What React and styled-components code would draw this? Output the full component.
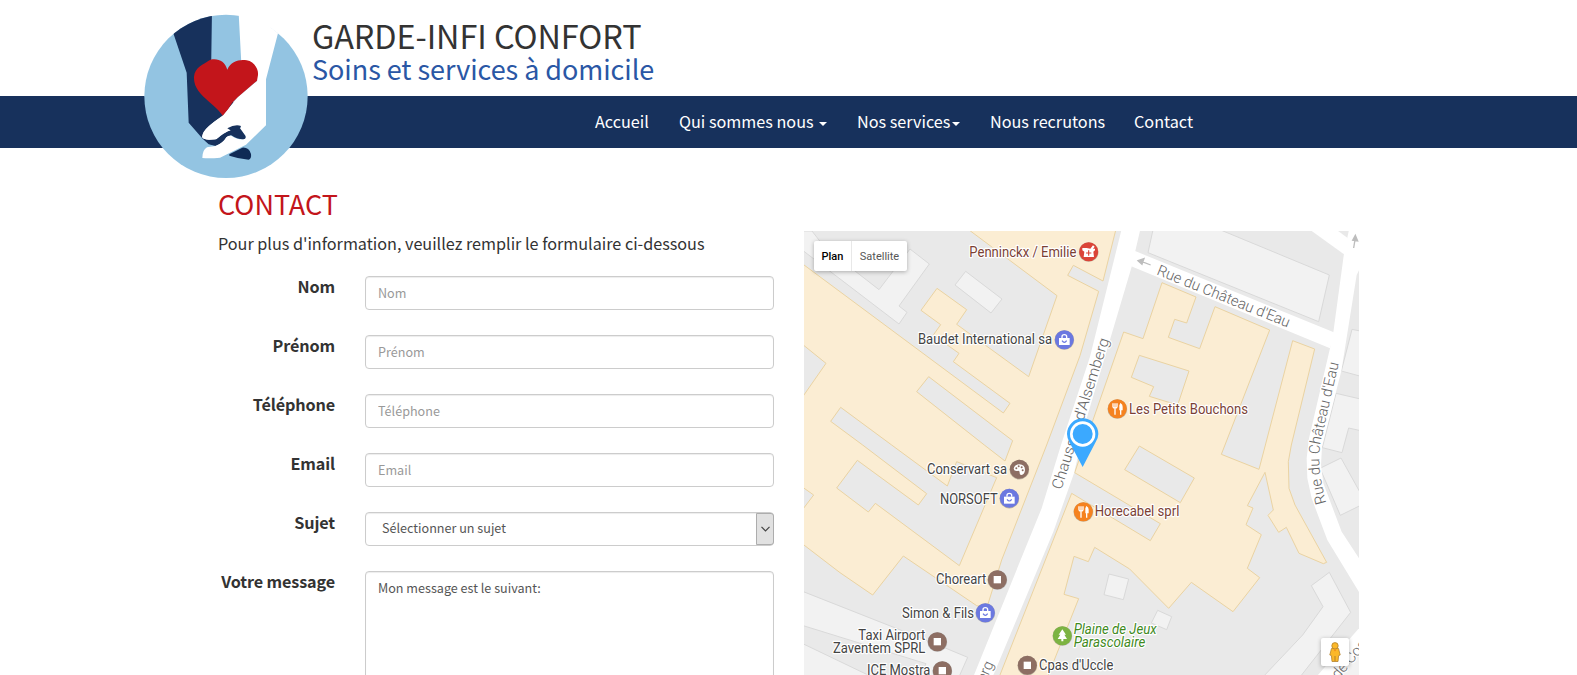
import React from "react";
import styled, { createGlobalStyle } from "styled-components";

const Global = createGlobalStyle`
  * { box-sizing: border-box; }
  body {
    margin: 0;
    background: #fff;
    color: #333;
    font-family: "Noto Sans CJK SC", "Open Sans", sans-serif;
    font-size: 16.2px;
    overflow: hidden;
  }
`;

const Page = styled.div`
  height: 675px;
  overflow: hidden;
`;

const Header = styled.header`
  position: relative;
  height: 148px;
`;

const Brand = styled.div`
  height: 96px;
  padding: 18px 0 0 312px;
`;

const BrandName = styled.div`
  font-size: 32.4px;
  line-height: 34px;
  letter-spacing: -0.06px;
  white-space: nowrap;
`;

const Tagline = styled.div`
  font-size: 27px;
  line-height: 33px;
  letter-spacing: -0.05px;
  color: #2a57a5;
  white-space: nowrap;
`;

const Logo = styled.svg`
  position: absolute;
  left: 140px;
  top: 10px;
  width: 172px;
  height: 172px;
`;

const Nav = styled.nav`
  display: flex;
  height: 52px;
  padding-left: 580px;
  background: #17315c;
`;

const NavItem = styled.a`
  display: flex;
  align-items: center;
  width: ${(p) => p.$w}px;
  height: 50px;
  padding-left: 15px;
  color: #fff;
  line-height: 50px;
  white-space: nowrap;
`;

const Caret = styled.span`
  margin-left: ${(p) => p.$gap}px;
  margin-top: 5px;
  border: 4px solid transparent;
  border-top-color: #fff;
  border-bottom: 0;
`;

const Main = styled.main`
  display: flex;
  padding-left: 218px;
`;

const FormColumn = styled.section`
  width: 586px;
  padding-top: 38px;
`;

const Title = styled.h1`
  margin: 0;
  color: #c3151b;
  font-size: 27px;
  font-weight: 400;
  line-height: 36px;
`;

const Intro = styled.p`
  margin: 8px 0 0;
  height: 46px;
  line-height: 26px;
  letter-spacing: -0.01px;
  white-space: nowrap;
`;

const Field = styled.div`
  display: flex;
  height: ${(p) => (p.$tall ? 215 : 34)}px;
  margin-bottom: 25px;
`;

const Label = styled.label`
  width: 117px;
  margin-right: 30px;
  font-weight: 700;
  line-height: 20px;
  letter-spacing: -0.13px;
  text-align: right;
  white-space: nowrap;
`;

const control = `
  width: 409px;
  height: 100%;
  margin: 0;
  padding: 0 12px 2px;
  border: 1px solid #ccc;
  border-radius: 4px;
  outline: 0;
  background: #fff;
  box-shadow: inset 0 1px 1px rgba(0, 0, 0, .075);
  color: #555;
  font-family: inherit;
  font-size: 12.6px;
`;

const Input = styled.input`
  ${control}
  &::placeholder { color: #999; opacity: 1; }
`;

const TextArea = styled.textarea`
  ${control}
  padding-top: 6px;
  line-height: 20px;
  resize: none;
`;

const Select = styled.div`
  ${control}
  display: flex;
  justify-content: space-between;
  padding: 0 0 0 16px;
  line-height: 30px;
`;

const SelectButton = styled.span`
  display: grid;
  place-items: center;
  width: 18px;
  height: 32px;
  margin-right: -1px;
  border: 1px solid #adadad;
  border-radius: 0 3px 3px 0;
  background: #e1e1e1;
`;

const MapPanel = styled.section`
  position: relative;
  width: 555px;
  height: 444px;
  margin-top: 83px;
  overflow: hidden;
  font-family: Roboto, sans-serif;
`;

const MapDrawing = styled.svg`
  display: block;
  width: 555px;
  height: 444px;
`;

const MapTypes = styled.div`
  position: absolute;
  left: 10px;
  top: 10px;
  display: flex;
  height: 30px;
  border-radius: 2px;
  background: #fff;
  box-shadow: 0 1px 4px rgba(0, 0, 0, .3);
`;

const MapType = styled.button`
  width: ${(p) => p.$w}px;
  padding: 0;
  border: 0;
  border-left: ${(p) => (p.$active ? "0" : "1px solid #e8e8e8")};
  background: none;
  color: ${(p) => (p.$active ? "#000" : "#565656")};
  font: ${(p) => (p.$active ? 500 : 400)} 11px Roboto, sans-serif;
`;

const Pegman = styled.div`
  position: absolute;
  left: 517px;
  top: 407px;
  display: grid;
  place-items: center;
  width: 28px;
  height: 28px;
  border-radius: 2px;
  background: #fff;
  box-shadow: 0 1px 4px rgba(0, 0, 0, .3);
`;

function LogoArt() {
  return (
    <Logo viewBox="0 0 516 516" aria-label="Garde-Infi Confort">
      <clipPath id="disc"><circle cx="258" cy="259" r="245" /></clipPath>
      <circle cx="258" cy="259" r="245" fill="#93c4e2" />
      <g clipPath="url(#disc)">
        <path d="M95 60 100 70 140 188 146 338 188 386 206 403 228 408 262 395 300 300 213 200 216 0H95Z" fill="#17315c" />
      </g>
      <path d="M296 10 304 160 352 212 293 262 247 317Q225 332 205 350 188 364 186 380 188 388 206 389L229 388Q250 371 272 360L300 353 330 300 378 346V208L414 70Q360 22 296 10Z" fill="#fff" />
      <path d="M378 208V346L318 404 240 443Q210 446 187 444 187 420 201 412L226 408Q250 398 258 382 264 374 274 377 290 389 310 388 319 386 316 377L299 356Q306 348 298 347 270 344 248 361L229 386 270 330 345 220Z" fill="#fff" />
      <path d="M187 382Q189 388 208 389L228 388Q255 366 276 360L299 355 293 340 250 318Q187 354 187 382Z" fill="#fff" />
      <path d="M204 392 229 389Q250 368 276 360L300 355 306 363 316 377Q320 386 309 388 291 388 274 376 266 374 258 382 245 403 222 406 208 403 197 394Z" fill="#17315c" />
      <path d="M262 355Q285 342 303 348L299 358 275 363Z" fill="#17315c" />
      <path d="M268 433 307 413Q326 411 333 432 335 446 326 449 298 447 268 437Z" fill="#0f2a55" />
      <path d="M262 179C272 153 300 147 320 151 343 155 356 177 354 195L351 212 293 262Q275 277 264 298L248 317Q238 301 207 275C182 253 160 232 162 200 164 171 192 162 211 149 236 144 254 154 262 179Z" fill="#c3151b" />
    </Logo>
  );
}

const TONES = { shop: "#6b78e0", food: "#f5821f", brown: "#8d6e63", park: "#7cb342", health: "#db4437" };

function PoiGlyph({ kind }) {
  switch (kind) {
    case "shop":
      return (
        <>
          <path d="M-16-5H16V16H-16Z" fill="#fff" />
          <path d="M-7-5V-9Q-7-15 0-15T7-9V-5" fill="none" stroke="#fff" strokeWidth="4" />
          <path d="M-7 3Q0 13 7 3" fill="none" stroke="#6b78e0" strokeWidth="3.5" />
        </>
      );
    case "food":
      return (
        <g fill="none" stroke="#fff" strokeWidth="4">
          <path d="M-13-16V-6Q-13-2-7-2T-1-6V-16M-7-16V18" />
          <path d="M10 18V-14Q14-12 14-5V3H8V-10L10-14" fill="#fff" />
        </g>
      );
    case "park":
      return <path d="M0-19 11-3H6L14 10H3V17H-3V10H-14L-6-3H-11Z" fill="#fff" />;
    case "art":
      return (
        <>
          <path d="M-17-2Q-14-15 0-15 17-14 17 2 16 15 6 17 0 17 1 9 1 3-6 5-16 6-17-2Z" fill="#fff" />
          <g fill="#8d6e63"><circle cx="-9" cy="-3" r="3" /><circle cx="-2" cy="-9" r="3" /><circle cx="7" cy="-6" r="3" /><circle cx="10" cy="3" r="3" /></g>
        </>
      );
    case "health":
      return (
        <>
          <path d="M-19-11H-6L5-9 13-19 18-15 13-9H19V-4L14 0 16 16H-15L-13 0-19-4Z" fill="#fff" />
          <path d="M0-4V12M-8 4H8" stroke="#db4437" strokeWidth="3.5" />
        </>
      );
    default:
      return <path d="M-11-11H11V11H-11Z" fill="#fff" />;
  }
}

const POIS = [
  { x: 866, y: 80, kind: "health", tone: "health", color: "#7b3f35", lines: [[508, 95, 321, "Penninckx / Emilie"]] },
  { x: 793, y: 344, kind: "shop", tone: "shop", lines: [[354, 356, 402, "Baudet International sa"]] },
  { x: 952, y: 551, kind: "food", tone: "food", color: "#7b3f35", lines: [[987, 566, 357, "Les Petits Bouchons"]] },
  { x: 658, y: 733, kind: "art", tone: "brown", lines: [[381, 747, 240, "Conservart sa"]] },
  { x: 628, y: 820, kind: "shop", tone: "shop", lines: [[420, 836, 173, "NORSOFT"]] },
  { x: 850, y: 860, kind: "food", tone: "food", color: "#7b3f35", lines: [[884, 872, 254, "Horecabel sprl"]] },
  { x: 592, y: 1064, kind: "box", tone: "brown", lines: [[408, 1077, 151, "Choreart"]] },
  { x: 556, y: 1163, kind: "shop", tone: "shop", lines: [[306, 1178, 216, "Simon & Fils"]] },
  { x: 412, y: 1250, kind: "box", tone: "brown", lines: [[175, 1244, 201, "Taxi Airport"], [99, 1283, 277, "Zaventem SPRL"]] },
  { x: 427, y: 1337, kind: "box", tone: "brown", lines: [[201, 1350, 190, "ICE Mostra"]] },
  { x: 787, y: 1232, kind: "park", tone: "park", color: "#3f8a1d", italic: true, lines: [[821, 1226, 249, "Plaine de Jeux"], [821, 1265, 215, "Parascolaire"]] },
  { x: 682, y: 1321, kind: "box", tone: "brown", lines: [[717, 1335, 223, "Cpas d'Uccle"]] },
];

const PALE = [
  "0,18 36,18 70,62 165,138 237,194 330,72 388,117 297,243 321,262 297,297 0,70",
  "497,139 606,222 573,264 465,180",
  "1060,10 1044,83 1556,290 1588,150 1250,10",
  "1656,313 1624,438 1690,456 1690,320",
  "1608,505 1690,524 1690,619 1646,609 1626,683 1567,668",
  "1623,699 1560,730 1621,871 1690,837 1690,820",
  "1588,1042 1534,1082 1569,1145 1508,1230 1385,1360 1497,1360 1652,1162",
  "927,1047 986,1062 970,1124 912,1109",
  "1073,1156 1115,1175 1100,1214 1054,1194",
  "0,1096 390,1250 503,1297 475,1360 0,1360",
  "1690,1270 1600,1370 1690,1370",
];

const SAND = [
  "0,111 610,564 630,535 460,410 477,385 400,330 422,299 363,256 411,190 500,254 470,298 686,455 771,212 498,8 949,8 909,168 820,121 803,151 896,199 840,392 740,660 605,1005 560,1150 530,1142 310,993 218,1110 120,1043 0,951",
  "971,321 1029,341 1086,173 1188,216 1160,294 1124,283 1105,337 1199,371 1245,245 1409,315 1264,688 1377,733 1478,347 1544,372 1474,660 1465,710 1467,790 1485,840 1580,1012 1570,1016 1497,985 1459,907 1436,922 1404,871 1420,855 1395,742 1342,842 1359,849 1338,899 1384,929 1342,1030 1379,1058 1299,1160 1174,1072 1106,1150 989,1032 884,967 865,1010 822,994 792,1108 836,1121 741,1360 596,1360 815,805 1051,947 1081,896 824,743",
];

const COURTS = [
  "0,352 78,415 0,527",
  "0,781 41,810 0,864",
  "122,547 92,589 188,660 380,806 355,840 172,706 110,789 205,861 226,835 478,1022 590,758 470,710 442,783 275,660",
  "386,455 350,500 553,660 615,708 638,647",
  "1018,391 1167,438 1133,540 1048,514 1061,485 994,457",
  "1018,663 1183,759 1141,833 974,734",
];

const ROADS = [
  "968,0 1024,0 995,125 860,580 822,745 760,920 576,1360 518,1360 680,960 725,850 783,660 870,395",
  "1000,76 1605,323 1590,370 990,122",
  "1650,0 1632,85 1600,322 1590,370 1527,640 1520,700 1522,760 1535,820 1582,945 1690,1122 1690,1020 1625,920 1570,775 1563,720 1566,665 1624,438 1670,150 1690,110 1690,0",
  "1510,0 1635,90 1647,42 1590,0",
  "1690,1195 1545,1360 1605,1360 1690,1270",
];

const Halo = styled.g`
  paint-order: stroke;
  stroke: #fff;
  stroke-width: 7px;
  stroke-linejoin: round;
  font-size: ${(p) => p.$size || 42}px;
  font-weight: ${(p) => p.$weight || 400};
  font-style: ${(p) => (p.$italic ? "italic" : "normal")};
  fill: ${(p) => p.$color || "#444"};
`;

function Polys({ list, ...rest }) {
  return <g {...rest}>{list.map((points) => <polygon key={points} points={points} />)}</g>;
}

function CityMap() {
  return (
    <MapDrawing viewBox="12 18 1665 1332">
      <rect width="1700" height="1400" fill="#e9e9e9" />
      <Polys list={PALE} fill="#f2f2f2" stroke="#d9d9d9" strokeWidth="3" />
      <polygon points="0,1199 378,1316 358,1360 225,1360 0,1252" fill="#e9e9e9" stroke="#d9d9d9" strokeWidth="3" />
      <Polys list={SAND} fill="#fbedd3" stroke="#ead3a2" strokeWidth="3" />
      <Polys list={COURTS} fill="#e9e9e9" stroke="#ead3a2" strokeWidth="3" />
      <Polys list={ROADS} fill="#fff" />
      <g fill="#bdbdbd" stroke="#bdbdbd" strokeWidth="4">
        <path d="M1052 120 1026 110M1014 107 1032 101 1026 118Z" />
        <path d="M1661 69 1665 44M1666 31 1658 46 1673 48Z" />
      </g>
      <path id="east" d="M1579 834Q1560 765 1558 715 1556 670 1567 630L1617 412" fill="none" />
      <Halo $size={45} $weight={300} $color="#666">
        <text transform="translate(1068 148) rotate(22)" textLength="426" lengthAdjust="spacingAndGlyphs">Rue du Château d'Eau</text>
        <text transform="translate(784 796) rotate(-72.4)" textLength="474" lengthAdjust="spacingAndGlyphs">Chaussée d'Alsemberg</text>
        <text><textPath href="#east" textLength="428" lengthAdjust="spacingAndGlyphs">Rue du Château d'Eau</textPath></text>
        <text transform="translate(582 1316) rotate(-66)" textAnchor="end">Alsemberg</text>
        <text transform="translate(1614 1364) rotate(-49)">de Cos</text>
      </Halo>
      {POIS.map((p) => (
        <g key={p.lines[0][3]}>
          <Halo $color={p.color} $italic={p.italic}>
            {p.lines.map(([x, y, w, t]) => <text key={t} x={x} y={y} textLength={w} lengthAdjust="spacingAndGlyphs">{t}</text>)}
          </Halo>
          <g transform={`translate(${p.x} ${p.y})`}>
            <circle cy="1" r="29.5" fill="#000" opacity=".25" />
            <circle r="28.5" fill={TONES[p.tone]} />
            <PoiGlyph kind={p.kind} />
          </g>
        </g>
      ))}
      <path d="M848 726 808 651Q801 638 801 627A47 47 0 0 1 895 627Q895 638 887 651Z" fill="#3ba9ff" />
      <circle cx="848" cy="627" r="34" fill="#3ba9ff" stroke="#fff" strokeWidth="8" />
    </MapDrawing>
  );
}

const FIELDS = ["Nom", "Prénom", "Téléphone", "Email"];

export default function App() {
  return (
    <Page>
      <Global />
      <Header>
        <Brand>
          <BrandName>GARDE-INFI CONFORT</BrandName>
          <Tagline>Soins et services à domicile</Tagline>
        </Brand>
        <Nav>
          <NavItem $w={84}>Accueil</NavItem>
          <NavItem $w={178}>Qui sommes nous<Caret $gap={5} /></NavItem>
          <NavItem $w={133}>Nos services<Caret $gap={2} /></NavItem>
          <NavItem $w={144}>Nous recrutons</NavItem>
          <NavItem $w={90}>Contact</NavItem>
        </Nav>
        <LogoArt />
      </Header>
      <Main>
        <FormColumn>
          <Title>CONTACT</Title>
          <Intro>Pour plus d'information, veuillez remplir le formulaire ci-dessous</Intro>
          {FIELDS.map((name) => (
            <Field key={name}>
              <Label>{name}</Label>
              <Input placeholder={name} />
            </Field>
          ))}
          <Field>
            <Label>Sujet</Label>
            <Select>
              Sélectionner un sujet
              <SelectButton>
                <svg width="9" height="6" viewBox="0 0 9 6" fill="none" stroke="#444" strokeWidth="1.2"><path d="M.5.8 4.5 4.8 8.5.8" /></svg>
              </SelectButton>
            </Select>
          </Field>
          <Field $tall>
            <Label>Votre message</Label>
            <TextArea defaultValue="Mon message est le suivant:" />
          </Field>
        </FormColumn>
        <MapPanel>
          <CityMap />
          <MapTypes>
            <MapType $active $w={37}>Plan</MapType>
            <MapType $w={56}>Satellite</MapType>
          </MapTypes>
          <Pegman>
            <svg width="12" height="20" viewBox="0 0 12 20">
              <path d="M2.5 6.5h7l1.7 6.5-1.6.6-.6 5.9H3l-.6-5.9L.8 13Z" fill="#fbb829" stroke="#b3822d" strokeWidth=".8" />
              <path d="M6 14v5" stroke="#b3822d" />
              <circle cx="6" cy="3.8" r="3.2" fill="#fbb829" stroke="#b3822d" strokeWidth=".8" />
              <path d="M4.4 7.4h3.2L6 9.6Z" fill="#f08a1c" />
            </svg>
          </Pegman>
        </MapPanel>
      </Main>
    </Page>
  );
}
